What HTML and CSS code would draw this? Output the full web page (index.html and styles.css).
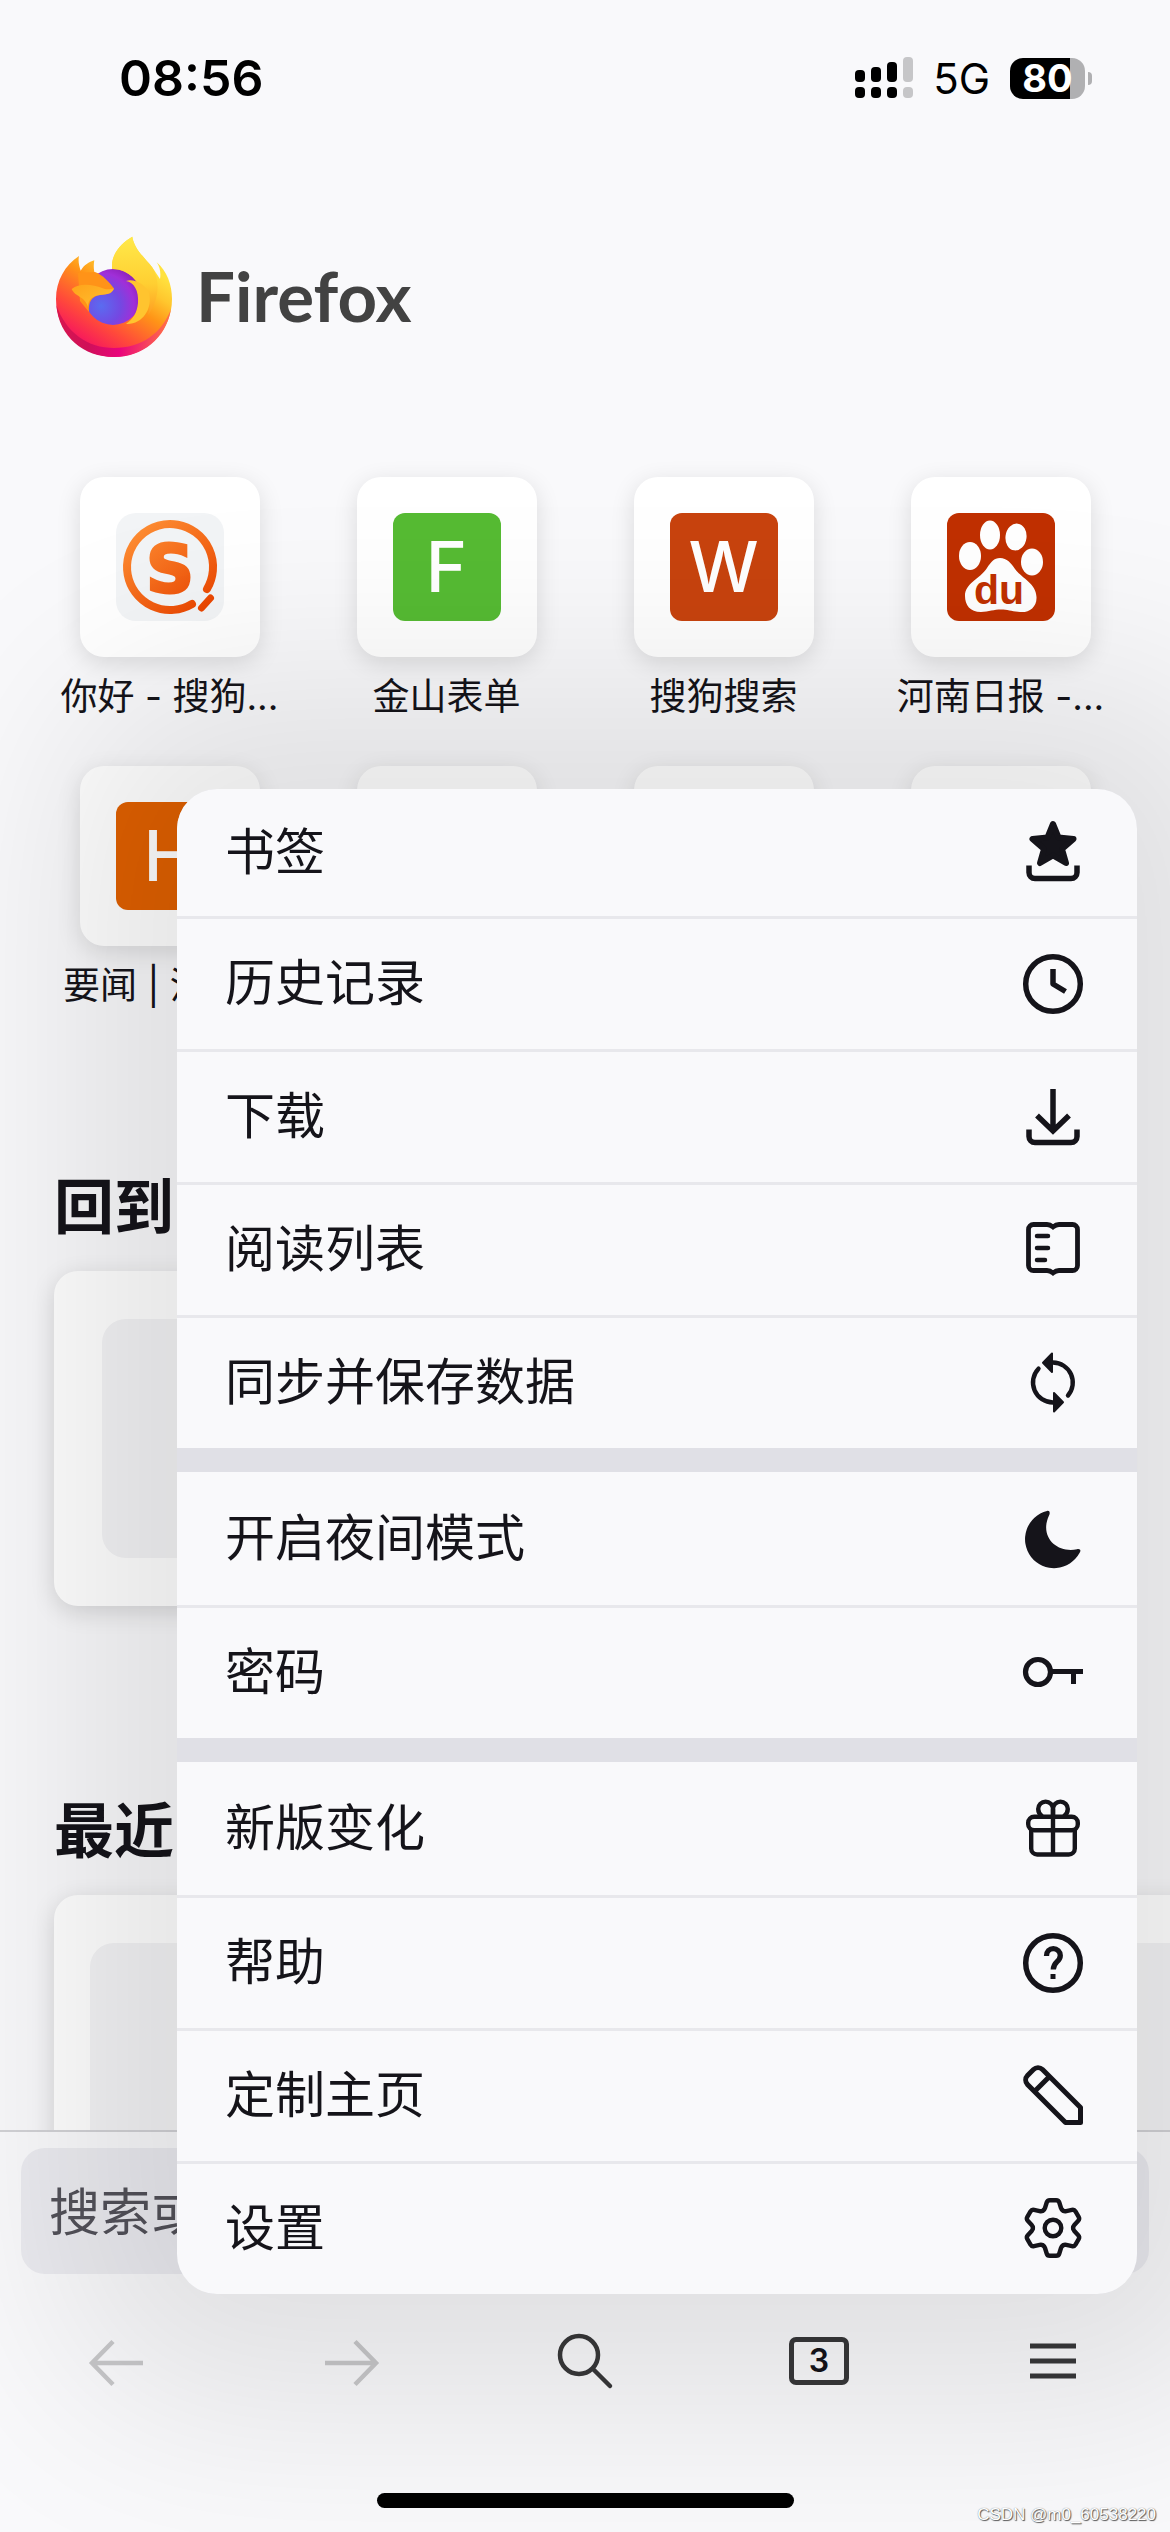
FILE: index.html
```html
<!DOCTYPE html>
<html lang="zh-CN">

<head>
  <meta charset="utf-8">
  <meta name="viewport" content="width=device-width, initial-scale=1">
  <title>Firefox</title>
  <link rel="stylesheet" href="styles.css">
</head>

<body>
  <div class="screen">
    <header class="status-bar">
      <span class="time">08:56</span>
      <div class="status-icons">
        <svg class="signal" width="58" height="42" viewBox="0 0 58 42">
          <g fill="#000">
            <rect x="0" y="13" width="10" height="12" rx="4" />
            <rect x="0" y="30" width="10" height="11" rx="4" />
            <rect x="16" y="10" width="10" height="15" rx="4" />
            <rect x="16" y="30" width="10" height="11" rx="4" />
            <rect x="32" y="5" width="10" height="20" rx="4" />
            <rect x="32" y="30" width="10" height="11" rx="4" />
          </g>
          <g fill="#c6c6c8">
            <rect x="48" y="0" width="10" height="25" rx="4" />
            <rect x="48" y="30" width="10" height="11" rx="4" />
          </g>
        </svg>
        <span class="network">5G</span>
        <div class="battery"><span class="battery-level">80</span></div>
      </div>
    </header>

    <main class="home">
      <div class="brand">
        <svg width="120" height="124" viewBox="0 0 120 124">
          <defs>
            <linearGradient id="fox-body" gradientUnits="userSpaceOnUse" x1="92" y1="30" x2="38" y2="112">
              <stop offset="0" stop-color="#ffe23f" />
              <stop offset=".2" stop-color="#ffc72e" />
              <stop offset=".42" stop-color="#ff9417" />
              <stop offset=".75" stop-color="#ff4a3a" />
              <stop offset="1" stop-color="#f7195c" />
            </linearGradient>
            <linearGradient id="fox-tail" gradientUnits="userSpaceOnUse" x1="4" y1="80" x2="112" y2="90">
              <stop offset="0" stop-color="#d8164f" />
              <stop offset=".3" stop-color="#cf1058" />
              <stop offset=".6" stop-color="#e9047c" />
              <stop offset="1" stop-color="#ff6a4a" />
            </linearGradient>
            <radialGradient id="globe" gradientUnits="userSpaceOnUse" cx="47" cy="71" r="44">
              <stop offset="0" stop-color="#5a6cf0" />
              <stop offset=".45" stop-color="#7448e2" />
              <stop offset=".75" stop-color="#a02fd8" />
              <stop offset="1" stop-color="#8a1fb4" />
            </radialGradient>
            <linearGradient id="fox-cheek" x1="0" y1="0" x2="1" y2="1">
              <stop offset="0" stop-color="#ffa21a" />
              <stop offset="1" stop-color="#ffc331" />
            </linearGradient>
            <linearGradient id="flame" x1="0" y1="0" x2="0" y2="1">
              <stop offset="0" stop-color="#ffe94a" />
              <stop offset=".6" stop-color="#ffcf32" />
              <stop offset="1" stop-color="#ff9d22" />
            </linearGradient>
          </defs>
          <path fill="url(#fox-body)" d="M25 21C24 26 25 31 26.700 35.700C30 30 35 27 40.300 25.300C39.500 30 39.500 35 41 39L58.300 36C56 20 67 8 78.300 1.700C80 14 91 23 98 32C101 36 104 41 106 44C107 38 106 32 102.700 27.300C113 36 118 50 118 64A58 58 0 0 1 2 64C2 46 11 30 25 21z" />
          <path fill="url(#fox-tail)" d="M2.300 70C12 98 34 113 60 113C88 113 108 98 117 74C112 104 88 122 60 122C30 122 5 102 2.300 70z" />
          <circle cx="59" cy="62" r="28" fill="url(#globe)" />
          <path fill="url(#flame)" d="M58.300 34C56 20 67 8 78.300 1.700C80 14 91 23 98 32C106 44 106 64 94 80C99 66 94 53 84 48C76 38 68 34 58.300 34z" />
          <path fill="#ffc42f" d="M72 46C80 47 85 56 84 68C83 78 79 84 72 89C88 90 99 74 95 58C92 50 80 43 72 46z" />
          <path fill="#ff9318" d="M24 38L41 37C49 40 55 47 60 53.500C57 60 50 59 46 60C38 61 34 67 35 77L26 66z" />
          <path fill="url(#fox-cheek)" d="M17.700 54C26 47 40 50 48 53C52 55 57 54 60 53.500C58 60 51 59 46 60C38 61 34 65 34 72C31 61 21 62 17.700 54z" />
        </svg>
        <h1 class="brand-name">Firefox</h1>
      </div>

      <nav class="top-sites">
        <a class="site" href="#">
          <span class="site-card">
            <svg width="108" height="108" viewBox="0 0 108 108">
              <defs>
                <linearGradient id="sogou" gradientUnits="userSpaceOnUse" x1="20" y1="10" x2="88" y2="98">
                  <stop offset="0" stop-color="#ff9136" />
                  <stop offset="1" stop-color="#ea4500" />
                </linearGradient>
              </defs>
              <rect width="108" height="108" rx="20" fill="#f2f4f6" />
              <g fill="none" stroke="url(#sogou)" stroke-linecap="round">
                <path stroke-width="8" d="M91 76A43 43 0 1 0 76 91" />
                <path stroke-width="7" d="M94.500 85L85.500 95" />
              </g>
              <text class="sogou-s" x="54" y="79" fill="url(#sogou)" stroke="url(#sogou)">S</text>
            </svg>
          </span>
          <span class="site-label">你好 - 搜狗...</span>
        </a>
        <a class="site" href="#">
          <span class="site-card"><span class="site-letter green">F</span></span>
          <span class="site-label">金山表单</span>
        </a>
        <a class="site" href="#">
          <span class="site-card"><span class="site-letter red">W</span></span>
          <span class="site-label">搜狗搜索</span>
        </a>
        <a class="site" href="#">
          <span class="site-card">
            <svg width="108" height="108" viewBox="0 0 108 108">
              <rect width="108" height="108" rx="12" fill="#c03000" />
              <g fill="#fff">
                <ellipse cx="23" cy="43" rx="11" ry="14" />
                <ellipse cx="43" cy="22" rx="10" ry="14.500" />
                <ellipse cx="69" cy="24" rx="10.500" ry="13.500" transform="rotate(8 69 24)" />
                <ellipse cx="85" cy="49" rx="11" ry="13.500" />
                <path d="M53 45C60 45 64 50 68 56C74 65 89 70 89.500 84C90 94 82 100 73 99C65 98.500 61 96.500 54 96.500C47 96.500 42 98.500 34 99C23 99 18 92 18 83C18 70 33 66 40 55C44 49 47 45 53 45z" />
              </g>
              <text class="baidu-du" x="52" y="91" fill="#c03000">du</text>
            </svg>
          </span>
          <span class="site-label">河南日报 -...</span>
        </a>
        <a class="site" href="#">
          <span class="site-card"><span class="site-letter orange">H</span></span>
          <span class="site-label">要闻 | 河南...</span>
        </a>
        <a class="site" href="#"><span class="site-card"></span></a>
        <a class="site" href="#"><span class="site-card"></span></a>
        <a class="site" href="#"><span class="site-card"></span></a>
      </nav>

      <section class="home-section">
        <h2>回到</h2>
        <div class="jump-card">
          <div class="placeholder"></div>
        </div>
      </section>

      <section class="home-section">
        <h2>最近</h2>
        <div class="recent-row">
          <div class="recent-card">
            <div class="placeholder"></div>
          </div>
          <div class="recent-card">
            <div class="placeholder"></div>
          </div>
        </div>
      </section>
    </main>

    <footer class="bottom-bar">
      <div class="url-bar">
        <input class="url-input" type="text" aria-label="搜索" placeholder="搜索或">
      </div>
      <div class="toolbar">
        <button class="tool" aria-label="后退" disabled>
          <svg class="icon" viewBox="0 0 72 72"><path stroke-width="4.500" d="M62 38H12M32 16.500L11 38l21 21.500" /></svg>
        </button>
        <button class="tool" aria-label="前进" disabled>
          <svg class="icon" viewBox="0 0 72 72"><path stroke-width="4.500" d="M10 38h50M40 16.500L61 38 40 59.500" /></svg>
        </button>
        <button class="tool" aria-label="搜索">
          <svg class="icon" viewBox="0 0 72 72" stroke-linecap="round"><circle cx="30" cy="30" r="19" stroke-width="4.500" /><path stroke-width="4.500" d="M44 44l17 17" /></svg>
        </button>
        <button class="tool" aria-label="标签页"><span class="tab-count">3</span></button>
        <button class="tool" aria-label="菜单">
          <svg class="icon" viewBox="0 0 72 72"><path stroke-width="5" d="M13 21h46M13 36h46M13 51h46" /></svg>
        </button>
      </div>
      <div class="home-indicator"></div>
    </footer>

    <div class="menu">
      <div class="menu-group">
        <button class="menu-item">
          <span class="menu-label">书签</span>
          <svg class="icon" viewBox="0 0 72 72">
            <path stroke-width="5.500" d="M12 48.500v7a6 6 0 0 0 6 6h36a6 6 0 0 0 6-6v-7" />
            <path fill="currentColor" stroke-width="6" stroke-linejoin="round" d="M36 7l5.500 13.500 15 1.500-11.500 10 4 14-13-7.500L23 46l4-14-11.500-10 15-1.500z" />
          </svg>
        </button>
        <button class="menu-item">
          <span class="menu-label">历史记录</span>
          <svg class="icon" viewBox="0 0 72 72"><circle cx="36" cy="36" r="27.300" stroke-width="5.500" /><path stroke-width="5.500" stroke-linejoin="round" d="M36 21v15l12.500 7.500" /></svg>
        </button>
        <button class="menu-item">
          <span class="menu-label">下载</span>
          <svg class="icon" viewBox="0 0 72 72"><path stroke-width="5.500" d="M12 48.500v7a6 6 0 0 0 6 6h36a6 6 0 0 0 6-6v-7M36 8v42M20 34.500L36 50l16-15.500" /></svg>
        </button>
        <button class="menu-item">
          <span class="menu-label">阅读列表</span>
          <svg class="icon" viewBox="0 0 72 72" stroke-linecap="round">
            <path stroke-width="4.800" d="M36 13q-3-2.500-6-2.500H16.500a5 5 0 0 0-5 5v36a5 5 0 0 0 5 5H30q3 0 6 2.500q3-2.500 6-2.500h13.500a5 5 0 0 0 5-5v-36a5 5 0 0 0-5-5H42q-3 0-6 2.500z" />
            <path stroke-width="4.500" d="M20 22h11M20 34h11M20 46h8" />
          </svg>
        </button>
        <button class="menu-item">
          <span class="menu-label">同步并保存数据</span>
          <svg class="icon" viewBox="0 0 72 72" stroke-linecap="round" stroke-linejoin="round">
            <path stroke-width="4.400" d="M36 15.500A20 20 0 0 1 51 48.500M21.500 21.700A20 20 0 0 0 36 55.500" />
            <path fill="currentColor" stroke-width="2" d="M35 6.500v18.500L26 15.700zM37 46v18.500L46 55.300z" />
          </svg>
        </button>
      </div>
      <div class="menu-group">
        <button class="menu-item">
          <span class="menu-label">开启夜间模式</span>
          <svg class="icon" viewBox="0 0 72 72"><path fill="currentColor" stroke="none" d="M30 8A29 29 0 1 0 62.500 50C64.500 47.500 63 45.500 60 46.300C40 50.500 22 34 32 12.500C33.500 9.500 32.500 7.300 30 8z" /></svg>
        </button>
        <button class="menu-item">
          <span class="menu-label">密码</span>
          <svg class="icon" viewBox="0 0 72 72"><circle cx="21" cy="35" r="12.500" stroke-width="5.200" /><path stroke-width="5" d="M34 34.500h32M56.500 34.500V47" /></svg>
        </button>
      </div>
      <div class="menu-group">
        <button class="menu-item">
          <span class="menu-label">新版变化</span>
          <svg class="icon" viewBox="0 0 72 72" stroke-width="4.400">
            <rect x="11.200" y="23.700" width="49.600" height="13.600" rx="6" />
            <path d="M14.200 37v18.500a6 6 0 0 0 6 6h31.600a6 6 0 0 0 6-6V37M36 16v46" />
            <path d="M36 23.500V16a7.400 7.400 0 0 0-14.800 0c0 3 1.500 5.500 4 7.500M36 23.500V16a7.400 7.400 0 0 1 14.800 0c0 3-1.500 5.500-4 7.500" />
          </svg>
        </button>
        <button class="menu-item">
          <span class="menu-label">帮助</span>
          <svg class="icon" viewBox="0 0 72 72">
            <circle cx="36" cy="36" r="27.300" stroke-width="5.500" />
            <path stroke-width="5.300" d="M29.500 29c0-4.500 3-7.300 6.800-7.300s7 3 7 6.800c0 6.500-7 6-7 14" />
            <path stroke-width="5" d="M33.500 49.500h5" />
          </svg>
        </button>
        <button class="menu-item">
          <span class="menu-label">定制主页</span>
          <svg class="icon" viewBox="0 0 72 72" stroke-width="5" stroke-linejoin="round"><path d="M63.500 62.500V47.500L25.500 9.500a6.500 6.500 0 0 0-9 0L10.500 15.500a6.500 6.500 0 0 0 0 9L48.500 62.500zM32 17L18 31" /></svg>
        </button>
        <button class="menu-item">
          <span class="menu-label">设置</span>
          <svg class="icon" viewBox="-36 -35 72 72" stroke-width="4.400" stroke-linecap="round">
            <path id="tooth" d="M-10-17.400Q-8.600-18.200-8-20L-6.300-25.500Q-5.600-27.800-3.200-27.800H3.200Q5.600-27.800 6.300-25.500L8-20Q8.600-18.200 10-17.400" />
            <use href="#tooth" transform="rotate(60)" />
            <use href="#tooth" transform="rotate(120)" />
            <use href="#tooth" transform="rotate(180)" />
            <use href="#tooth" transform="rotate(240)" />
            <use href="#tooth" transform="rotate(300)" />
            <circle r="8.300" />
          </svg>
        </button>
      </div>
    </div>

    <span class="watermark">CSDN @m0_60538220</span>
  </div>
</body>

</html>
```

FILE: styles.css
```css
* {
  box-sizing: border-box;
}

body {
  margin: 0;
  background-color: #f9f9fb;
  color: #15141a;
  font-family: Inter, "Noto Sans CJK SC", sans-serif;
}

button {
  padding: 0;
  border: none;
  background: none;
  color: inherit;
  font: inherit;
}

h1,
h2 {
  margin: 0;
}

svg {
  display: block;
}

.screen {
  position: relative;
  display: flex;
  flex-direction: column;
  height: 100vh;
  overflow: hidden;
}

/* status bar */

.status-bar {
  display: flex;
  justify-content: space-between;
  align-items: center;
  height: 156px;
  padding: 0 78px 0 119px;
  color: #000;
}

.time {
  font-size: 50px;
  font-weight: 600;
}

.status-icons {
  display: flex;
  align-items: center;
  gap: 20px;
}

.network {
  font-size: 42px;
  font-weight: 400;
}

.battery {
  position: relative;
  width: 75px;
  height: 41px;
  margin-right: 7px;
  border-radius: 13px;
  background: linear-gradient(to right, #000 80%, #b0b0b2 80%);
}

.battery::after {
  content: "";
  position: absolute;
  top: 14px;
  right: -7px;
  width: 4px;
  height: 13px;
  border-radius: 0 4px 4px 0;
  background-color: #b0b0b2;
}

.battery-level {
  display: block;
  color: #fff;
  font-size: 38px;
  font-weight: 700;
  line-height: 41px;
  text-align: center;
}

/* home page */

.home {
  flex: 1;
  min-height: 0;
  overflow: hidden;
}

.brand {
  display: flex;
  align-items: center;
  gap: 22px;
  height: 124px;
  margin: 79px 54px 118px;
}

.brand-name {
  padding-bottom: 4px;
  color: #424242;
  font-family: Lato, sans-serif;
  font-size: 69px;
  font-weight: 700;
}

.top-sites {
  display: grid;
  grid-template-columns: repeat(4, 1fr);
  row-gap: 42px;
  padding: 0 31px;
}

.site {
  display: flex;
  flex-direction: column;
  align-items: center;
  gap: 13px;
  color: inherit;
  text-decoration: none;
}

.site-card {
  display: flex;
  justify-content: center;
  align-items: center;
  width: 180px;
  height: 180px;
  border-radius: 24px;
  background-color: #fff;
  box-shadow: 0 6px 24px rgba(0, 0, 0, 0.12);
}

.site-letter {
  width: 108px;
  height: 108px;
  border-radius: 12px;
  color: #fff;
  font-size: 70px;
  font-weight: 500;
  line-height: 108px;
  text-align: center;
}

.green {
  background-color: #56bb33;
}

.red {
  background-color: #c8430e;
}

.orange {
  background-color: #e06000;
}

.sogou-s {
  font: bold 66px "DejaVu Sans", sans-serif;
  stroke-width: 3px;
  text-anchor: middle;
}

.baidu-du {
  font: bold 41px "Liberation Sans", sans-serif;
  text-anchor: middle;
}

.site-label {
  font-size: 37px;
  line-height: 54px;
  white-space: nowrap;
}

.home-section {
  padding: 155px 54px 31px;
}

.home-section h2 {
  margin-bottom: 33px;
  font-family: "Noto Sans CJK SC", sans-serif;
  font-size: 60px;
  font-weight: 700;
  line-height: 70px;
}

.jump-card,
.recent-card {
  border-radius: 24px;
  background-color: #fff;
  box-shadow: 0 6px 24px rgba(0, 0, 0, 0.14);
}

.jump-card {
  padding: 48px;
}

.placeholder {
  height: 239px;
  border-radius: 24px;
  background-color: #f4f4f6;
}

.jump-card .placeholder {
  width: 239px;
}

.recent-row {
  display: flex;
  gap: 24px;
}

.recent-card {
  flex: none;
  width: 80%;
  padding: 48px 36px;
}

/* url bar and toolbar */

.bottom-bar {
  border-top: 2px solid #d2d2d6;
  background-color: #f9f9fb;
}

.url-bar {
  padding: 16px 21px 0;
}

.url-input {
  display: block;
  width: 100%;
  height: 126px;
  padding: 0 28px 4px;
  border: none;
  border-radius: 24px;
  background-color: #ebebf0;
  font-family: "Noto Sans CJK SC", sans-serif;
  font-size: 51px;
}

.url-input::placeholder {
  color: #53525a;
  opacity: 1;
}

.toolbar {
  display: grid;
  grid-template-columns: repeat(5, 1fr);
  height: 174px;
}

.tool {
  display: flex;
  justify-content: center;
  align-items: center;
  color: #38383a;
}

.tool:disabled {
  color: #c8c8ca;
}

.tab-count {
  width: 60px;
  height: 48px;
  border: 5px solid #38383a;
  border-radius: 7px;
  color: #15141a;
  font-size: 32px;
  font-weight: 600;
  line-height: 38px;
}

.home-indicator {
  width: 417px;
  height: 15px;
  margin: 45px auto 24px;
  border-radius: 8px;
  background-color: #000;
}

.icon {
  flex: none;
  width: 72px;
  height: 72px;
  fill: none;
  stroke: currentColor;
}

/* popup menu */

.menu {
  position: absolute;
  right: 33px;
  bottom: 238px;
  left: 177px;
  display: flex;
  flex-direction: column;
  gap: 24px;
  overflow: hidden;
  border-radius: 40px;
  background-color: #e0e0e6;
  box-shadow: 0 0 200px 110px rgba(0, 0, 0, 0.1);
}

.menu-item {
  display: flex;
  justify-content: space-between;
  align-items: center;
  width: 100%;
  height: 133px;
  padding: 0 48px;
  border-bottom: 3px solid #e8e8ec;
  background-color: #f9f9fb;
  font-family: "Noto Sans CJK SC", sans-serif;
  font-size: 50px;
}

.menu-item:first-child {
  height: 136px;
}

.menu-group:first-child .menu-item:first-child {
  height: 130px;
}

.menu-item:last-child {
  height: 130px;
  border-bottom: none;
}

.menu-label {
  padding-bottom: 10px;
}

.watermark {
  position: absolute;
  right: 14px;
  bottom: 7px;
  color: #fff;
  font-family: "Liberation Sans", Arial, sans-serif;
  font-size: 17px;
  text-shadow: 1px 1px 1px #555, 0 0 1px #777;
}
```
